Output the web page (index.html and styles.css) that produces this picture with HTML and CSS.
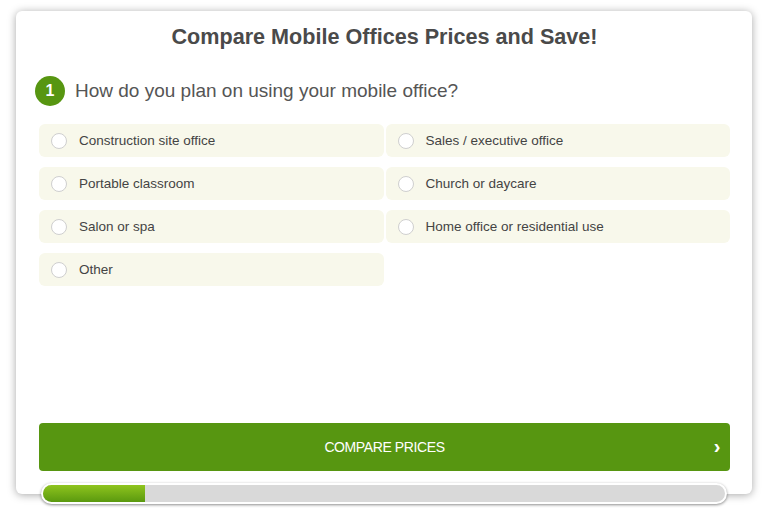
FILE: index.html
```html
<!DOCTYPE html>
<html lang="en">
<head>
    <meta charset="UTF-8">
    <meta name="viewport" content="width=device-width, initial-scale=1.0">
    <title>Compare Mobile Offices Prices</title>
    <link rel="stylesheet" href="styles.css">
</head>
<body>
    <div class="card">
        <h1>Compare Mobile Offices Prices and Save!</h1>

        <div class="step">
            <span class="step-num">1</span>
            <h2>How do you plan on using your mobile office?</h2>
        </div>

        <div class="options">
            <label class="option"><span class="radio"></span>Construction site office</label>
            <label class="option"><span class="radio"></span>Sales / executive office</label>
            <label class="option"><span class="radio"></span>Portable classroom</label>
            <label class="option"><span class="radio"></span>Church or daycare</label>
            <label class="option"><span class="radio"></span>Salon or spa</label>
            <label class="option"><span class="radio"></span>Home office or residential use</label>
            <label class="option"><span class="radio"></span>Other</label>
        </div>

        <button class="submit">
            COMPARE PRICES
            <span class="chevron">&rsaquo;</span>
        </button>

        <div class="progress">
            <div class="progress-fill" style="width: 15%"></div>
        </div>
    </div>
</body>
</html>
```

FILE: styles.css
```css
html, body {
    height: 100%;
}
body {
    margin: 0;
    background: #fff;
    font-family: "Liberation Sans", Arial, sans-serif;
    padding-top: 11px;
    box-sizing: border-box;
}
.card {
    box-sizing: border-box;
    width: 736px;
    min-height: 483px;
    margin-left: 16px;
    padding: 13px 22px 0 23px;
    background: #fff;
    border-radius: 6px;
    box-shadow: 0 1px 8px rgba(0, 0, 0, 0.35);
    display: flex;
    flex-direction: column;
}
h1 {
    margin: 0;
    font-size: 21.6px;
    line-height: 26px;
    font-weight: bold;
    color: #4a4a4a;
    text-align: center;
}
.step {
    display: flex;
    align-items: center;
    gap: 10px;
    margin: 26px 0 0 -4px;
}
.step-num {
    width: 30px;
    height: 30px;
    border-radius: 50%;
    background: #579611;
    color: #fff;
    font-size: 16px;
    font-weight: bold;
    display: flex;
    align-items: center;
    justify-content: center;
}
.step h2 {
    margin: 0;
    font-size: 19px;
    font-weight: normal;
    color: #555;
}
.options {
    display: grid;
    grid-template-columns: 1fr 1fr;
    gap: 10px 2px;
    margin-top: 18px;
}
.option {
    height: 33px;
    display: flex;
    align-items: center;
    gap: 12px;
    padding-left: 12px;
    background: #f8f8eb;
    border-radius: 6px;
    font-size: 13.5px;
    color: #444;
    cursor: pointer;
}
.radio {
    box-sizing: border-box;
    width: 16px;
    height: 16px;
    border-radius: 50%;
    border: 1px solid #cfcfcf;
    background: #fff;
}
.submit {
    position: relative;
    margin-top: auto;
    height: 48px;
    border: none;
    border-radius: 4px;
    background: #579611;
    color: #fff;
    font-family: "Liberation Sans", Arial, sans-serif;
    font-size: 14px;
    letter-spacing: -0.4px;
    cursor: pointer;
}
.chevron {
    position: absolute;
    right: 10px;
    top: 13px;
    font-size: 20px;
    font-weight: bold;
    line-height: 20px;
}
.progress {
    height: 21px;
    margin: 12px 3px -10px 2px;
    box-sizing: border-box;
    border: 2px solid #fff;
    border-radius: 11px;
    background: #d9d9d9;
    overflow: hidden;
    box-shadow: 0 1px 3px rgba(0, 0, 0, 0.45);
}
.progress-fill {
    height: 100%;
    background: linear-gradient(#8fc41e, #5a990f);
}
```
